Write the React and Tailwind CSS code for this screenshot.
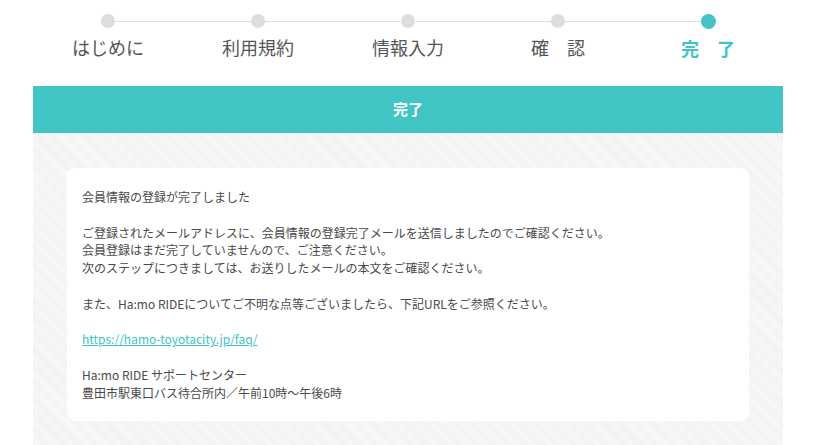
import React from "react";

const steps = [
  { label: "はじめに", done: false },
  { label: "利用規約", done: false },
  { label: "情報入力", done: false },
  { label: "確　認", done: false },
  { label: "完　了", done: true },
];

const StepBar = () => {
  return (
    <div className="relative flex pt-[14px]">
      {/* line between the dots */}
      <div className="absolute left-[75px] right-[75px] top-[21px] h-px bg-[#dddddd]" />
      {steps.map((step) => (
        <div key={step.label} className="relative flex w-[150px] flex-col items-center">
          <div
            className={
              step.done
                ? "h-[15px] w-[15px] rounded-full bg-[#40c4c4]"
                : "h-[14px] w-[14px] rounded-full bg-[#dddddd]"
            }
          />
          <div
            className={
              step.done
                ? "mt-[3px] text-[18px] leading-[32px] font-bold text-[#40c4c4]"
                : "mt-[3px] text-[18px] leading-[32px] text-[#555555]"
            }
          >
            {step.label}
          </div>
        </div>
      ))}
    </div>
  );
};

export default function App() {
  return (
    <div
      className="min-h-[445px] bg-white"
      style={{ fontFamily: '"Noto Sans CJK JP", "Noto Sans", sans-serif' }}
    >
      <div className="ml-[33px] w-[750px]">
        <StepBar />

        <div className="mt-[22px] flex h-[47px] items-center justify-center bg-[#40c4c4] text-[15px] font-bold text-white">
          完了
        </div>

        <div className="bg-[repeating-linear-gradient(45deg,#f1f1f1_0px,#f1f1f1_1px,#f9f9f9_1px,#f9f9f9_2px)] px-[34px] pt-[35px] pb-[30px]">
          <div className="rounded-[8px] bg-white px-[15px] pt-[20px] pb-[19px] text-[12px] leading-[17.8px] text-[#4a4a4a]">
            <p>会員情報の登録が完了しました</p>
            <br />
            <p>
              ご登録されたメールアドレスに、会員情報の登録完了メールを送信しましたのでご確認ください。
              <br />
              会員登録はまだ完了していませんので、ご注意ください。
              <br />
              次のステップにつきましては、お送りしたメールの本文をご確認ください。
            </p>
            <br />
            <p>また、Ha:mo RIDEについてご不明な点等ございましたら、下記URLをご参照ください。</p>
            <br />
            <p>
              <a href="#" className="text-[#40c4c4] underline">
                https://hamo-toyotacity.jp/faq/
              </a>
            </p>
            <br />
            <p>
              Ha:mo RIDE サポートセンター
              <br />
              豊田市駅東口バス待合所内／午前10時～午後6時
            </p>
          </div>
        </div>
      </div>
    </div>
  );
}
